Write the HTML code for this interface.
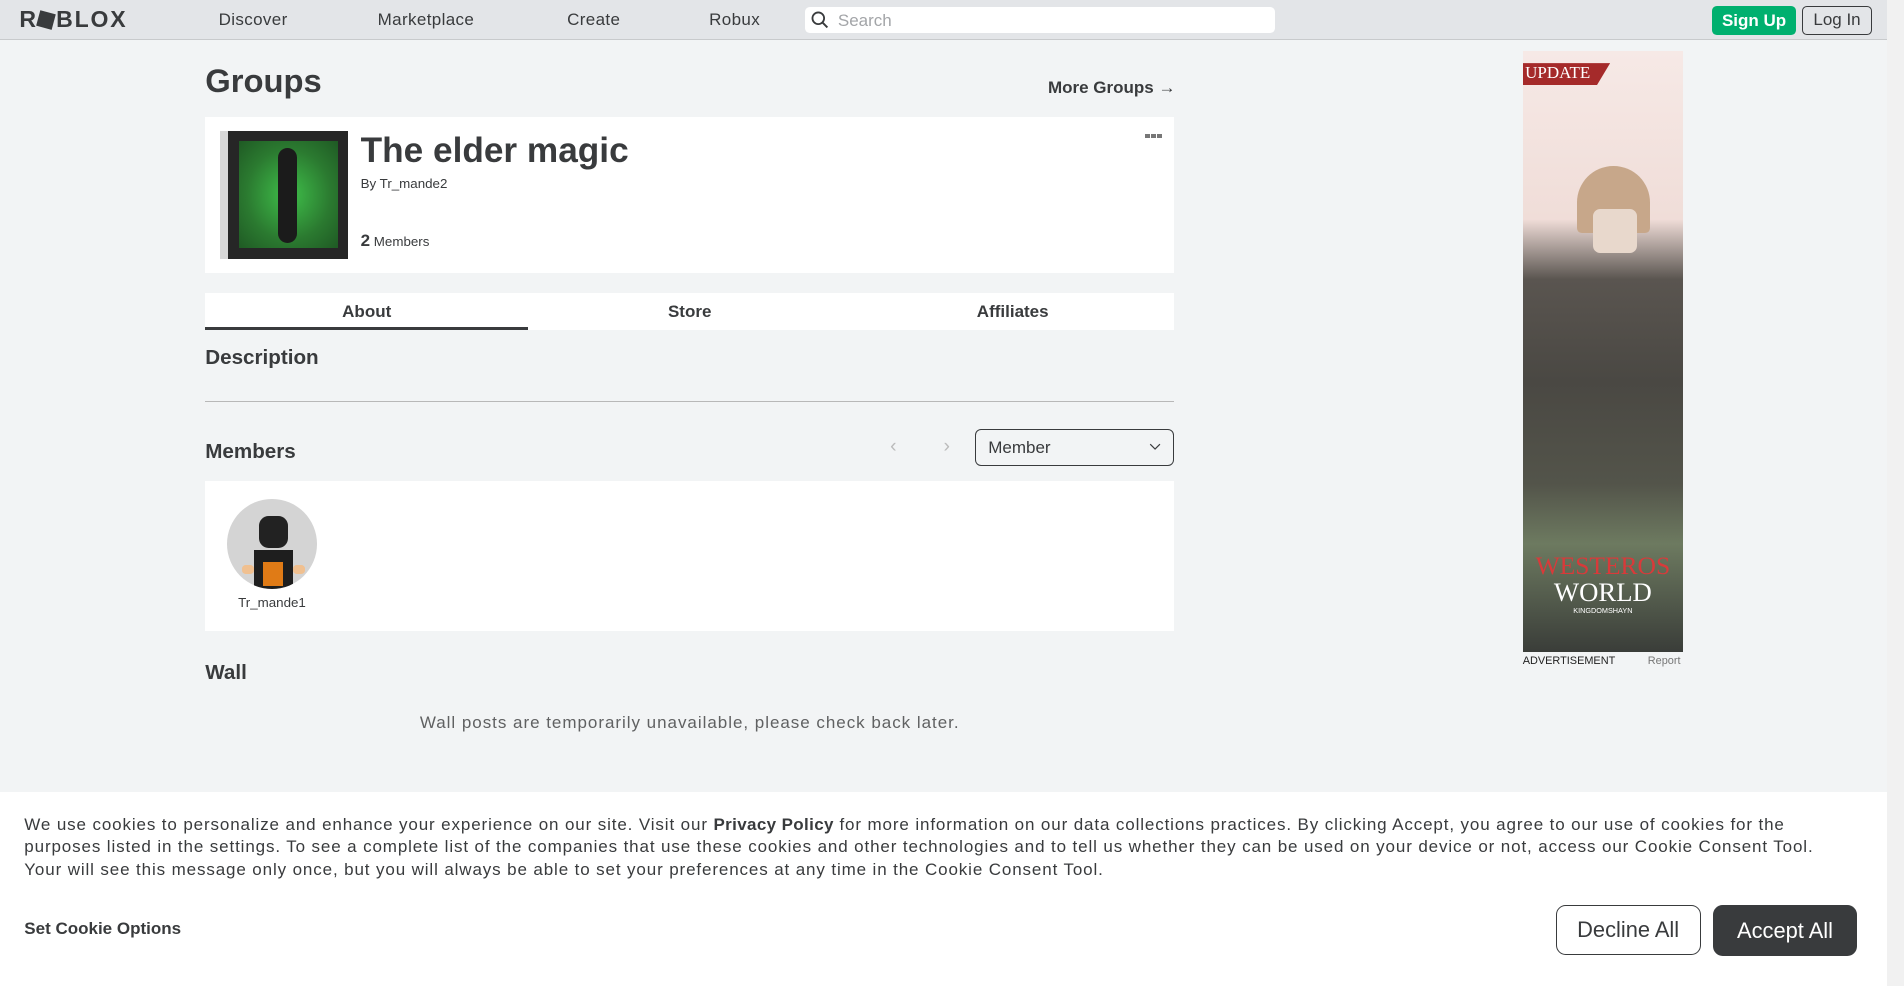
<!DOCTYPE html>
<html><head><meta charset="utf-8"><style>
html{zoom:1.2143}
body{margin:0;width:1568px;height:812px;overflow:hidden;background:#f2f4f5;font-family:"Liberation Sans",sans-serif;color:#393b3d;position:relative}
.a{position:absolute}
.nav{left:0;top:0;width:1554px;height:32px;background:#e3e5e8;border-bottom:1px solid #c8cacc}
.nav span{position:absolute;top:8px;font-size:14px;color:#393b3d;letter-spacing:0.3px}
.bold{font-weight:bold}
</style></head><body>
<div class="a nav">
 <div class="a bold" style="left:16px;top:5px;font-size:19px;letter-spacing:1.5px;color:#393b3d">R<span style="position:relative;top:1px;left:0;display:inline-block;width:13px;height:13px;background:#393b3d;transform:rotate(15deg);margin:0 2px 0 0"></span>BLOX</div>
 <span style="left:180px">Discover</span>
 <span style="left:311px">Marketplace</span>
 <span style="left:467px">Create</span>
 <span style="left:584px">Robux</span>
 <div class="a" style="left:663px;top:6px;width:387px;height:21px;background:#fff;border-radius:4px">
  <svg class="a" style="left:5px;top:3px" width="15" height="15" viewBox="0 0 15 15"><circle cx="6" cy="6" r="4.8" fill="none" stroke="#393b3d" stroke-width="1.5"/><path d="M9.5 9.5L13.5 13.5" stroke="#393b3d" stroke-width="1.6"/></svg>
  <div class="a" style="left:27px;top:3px;font-size:14px;color:#a3a5a8">Search</div>
 </div>
 <div class="a bold" style="left:1410px;top:5px;width:69px;height:24px;background:#00b06f;border-radius:4px;color:#fff;font-size:14px;text-align:center;line-height:24px">Sign Up</div>
 <div class="a" style="left:1484px;top:5px;width:56px;height:22px;border:1px solid #393b3d;border-radius:4px;font-size:14px;text-align:center;line-height:22px">Log In</div>
</div>
<div class="a" style="left:1554px;top:0;width:14px;height:812px;background:#f1f1f1"></div>

<div class="a bold" style="left:169px;top:51px;font-size:27px">Groups</div>
<div class="a" style="left:863px;top:64px;font-size:14px;font-weight:bold">More Groups →</div>

<div class="a" style="left:169px;top:96px;width:798px;height:129px;background:#fff">
 <div class="a" style="left:12px;top:12px;width:106px;height:105px;background:#d8d8d8"></div>
 <div class="a" style="left:19px;top:12px;width:99px;height:105px;background:#262626"></div>
 <div class="a" style="left:28px;top:20px;width:81px;height:88px;background:radial-gradient(ellipse at center,#3fbf4a,#2b7a30 60%,#1f5a24)"></div>
 <div class="a" style="left:60px;top:26px;width:16px;height:78px;background:#1b1b1b;border-radius:8px"></div>
 <div class="a bold" style="left:128px;top:12px;font-size:29px">The elder magic</div>
 <div class="a" style="left:128px;top:49px;font-size:11px">By Tr_mande2</div>
 <div class="a" style="left:128px;top:94px;font-size:11px"><b style="font-size:14px">2</b> Members</div>
 <div class="a" style="left:774px;top:14px;width:4px;height:4px;background:#777"></div>
 <div class="a" style="left:779px;top:14px;width:4px;height:4px;background:#777"></div>
 <div class="a" style="left:784px;top:14px;width:4px;height:4px;background:#777"></div>
</div>

<div class="a" style="left:169px;top:241px;width:798px;height:31px;background:#fff;font-size:14px;font-weight:bold">
 <div class="a" style="left:0;width:266px;text-align:center;top:8px">About</div>
 <div class="a" style="left:266px;width:266px;text-align:center;top:8px">Store</div>
 <div class="a" style="left:532px;width:266px;text-align:center;top:8px">Affiliates</div>
 <div class="a" style="left:0;top:28px;width:266px;height:3px;background:#393b3d"></div>
</div>

<div class="a bold" style="left:169px;top:285px;font-size:17px">Description</div>
<div class="a" style="left:169px;top:330px;width:798px;height:1px;background:#b8b8b8"></div>

<div class="a bold" style="left:169px;top:362px;font-size:17px">Members</div>
<div class="a" style="left:733px;top:358px;font-size:16px;color:#bbb">‹</div>
<div class="a" style="left:777px;top:358px;font-size:16px;color:#bbb">›</div>
<div class="a" style="left:803px;top:353px;width:162px;height:29px;border:1px solid #393b3d;border-radius:5px">
 <div class="a" style="left:10px;top:7px;font-size:14px">Member</div>
 <svg class="a" style="left:142px;top:11px" width="10" height="7"><path d="M1 1l4 4 4-4" fill="none" stroke="#393b3d"/></svg>
</div>

<div class="a" style="left:169px;top:396px;width:798px;height:124px;background:#fff">
 <div class="a" style="left:18px;top:15px;width:74px;height:74px;border-radius:50%;background:#d4d4d4;overflow:hidden">
  <div class="a" style="left:26px;top:14px;width:24px;height:26px;background:#222;border-radius:8px"></div>
  <div class="a" style="left:22px;top:42px;width:32px;height:34px;background:#1e1e1e"></div>
  <div class="a" style="left:30px;top:52px;width:16px;height:20px;background:#e07b16"></div>
  <div class="a" style="left:12px;top:54px;width:10px;height:8px;background:#f0c090;border-radius:3px"></div>
  <div class="a" style="left:54px;top:54px;width:10px;height:8px;background:#f0c090;border-radius:3px"></div>
 </div>
 <div class="a" style="left:0;width:110px;text-align:center;top:94px;font-size:11px">Tr_mande1</div>
</div>

<div class="a bold" style="left:169px;top:544px;font-size:17px">Wall</div>
<div class="a" style="left:169px;width:798px;text-align:center;top:587px;font-size:14px;color:#606162;letter-spacing:0.8px">Wall posts are temporarily unavailable, please check back later.</div>

<div class="a" style="left:1254px;top:42px;width:132px;height:495px;background:linear-gradient(#f6e9e6 0%,#f0ddd8 28%,#5a5550 38%,#4a4843 55%,#53544a 72%,#6d7a60 82%,#3a3d39 100%)">
 <div class="a" style="left:0;top:10px;width:72px;height:18px;background:#a52a2a;clip-path:polygon(0 0,100% 0,85% 100%,0 100%)"></div>
 <div class="a" style="left:2px;top:10px;font-size:14px;color:#fff;font-family:'Liberation Serif',serif">UPDATE</div>
 <div class="a" style="left:45px;top:95px;width:60px;height:55px;background:#c7a78a;border-radius:30px 30px 4px 4px"></div>
 <div class="a" style="left:58px;top:130px;width:36px;height:36px;background:#e8d8cc;border-radius:6px"></div>
 <div class="a" style="left:0;width:132px;text-align:center;top:412px;font-size:21px;color:#d83a3a;font-family:'Liberation Serif',serif">WESTEROS</div>
 <div class="a" style="left:0;width:132px;text-align:center;top:433px;font-size:22px;color:#fff;font-family:'Liberation Serif',serif">WORLD</div>
 <div class="a" style="left:0;width:132px;text-align:center;top:457px;font-size:6px;color:#fff">KINGDOMSHAYN</div>
</div>
<div class="a" style="left:1254px;top:539px;font-size:9px;color:#222">ADVERTISEMENT</div>
<div class="a" style="left:1357px;top:539px;font-size:9px;color:#777">Report</div>

<div class="a" style="left:0;top:652px;width:1554px;height:160px;background:#fff">
 <div class="a" style="left:20px;top:18px;width:1505px;font-size:14px;line-height:18.6px;color:#393b3d;letter-spacing:0.72px">We use cookies to personalize and enhance your experience on our site. Visit our <b style="letter-spacing:0.3px">Privacy Policy</b> for more information on our data collections practices. By clicking Accept, you agree to our use of cookies for the purposes listed in the settings. To see a complete list of the companies that use these cookies and other technologies and to tell us whether they can be used on your device or not, access our Cookie Consent Tool. Your will see this message only once, but you will always be able to set your preferences at any time in the Cookie Consent Tool.</div>
 <div class="a bold" style="left:20px;top:105px;font-size:14px">Set Cookie Options</div>
 <div class="a" style="left:1281px;top:93px;width:118px;height:40px;border:1px solid #393b3d;border-radius:8px;text-align:center;line-height:40px;font-size:18px">Decline All</div>
 <div class="a" style="left:1411px;top:93px;width:118px;height:42px;background:#393b3d;border-radius:8px;text-align:center;line-height:42px;font-size:18px;color:#fff">Accept All</div>
</div>
</body></html>
